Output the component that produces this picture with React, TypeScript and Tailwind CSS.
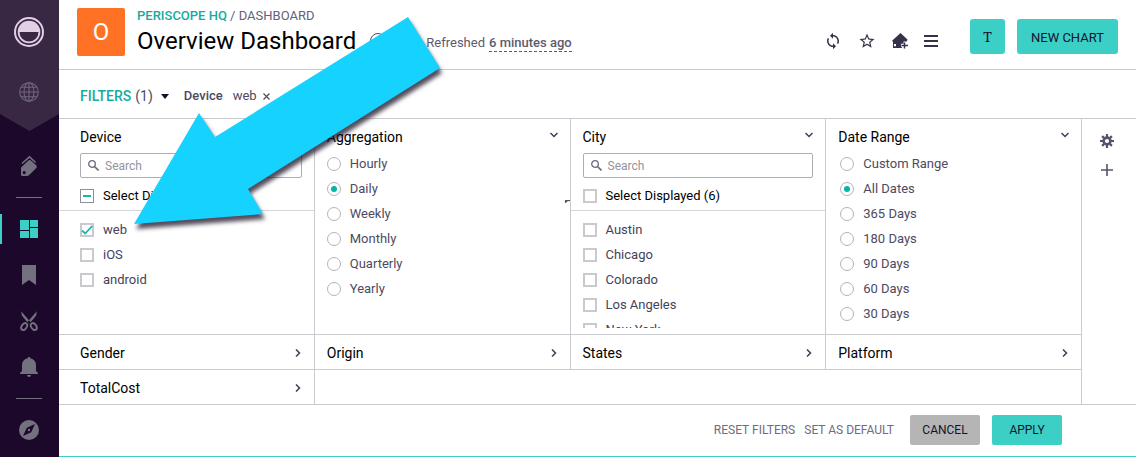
import type { ReactNode } from 'react';
import { MdStarBorder, MdSync } from 'react-icons/md';

type FilterOption = {
  label: string;
  checked?: boolean;
};

type ListFilterProps = {
  title: string;
  name: string;
  total: number;
  partial?: boolean;
  first?: boolean;
  options: FilterOption[];
};

const devices: FilterOption[] = [{ label: 'web', checked: true }, { label: 'iOS' }, { label: 'android' }];

const cities: FilterOption[] = [
  { label: 'Austin' },
  { label: 'Chicago' },
  { label: 'Colorado' },
  { label: 'Los Angeles' },
  { label: 'New York' },
];

const aggregations = ['Hourly', 'Daily', 'Weekly', 'Monthly', 'Quarterly', 'Yearly'];

const dateRanges = ['Custom Range', 'All Dates', '365 Days', '180 Days', '90 Days', '60 Days', '30 Days'];

const Logo = () => (
  <svg viewBox="0 0 30 30" className="size-[30px]">
    <circle cx="15" cy="15" r="14" fill="none" stroke="#e2cfe6" strokeWidth="2" />
    <circle cx="15" cy="15" r="11.3" fill="#e2cfe6" />
    <path d="M5.5 15h19a9.5 9.5 0 0 1-19 0z" fill="#392844" />
  </svg>
);

const GlobeIcon = () => (
  <svg viewBox="0 0 20 20" className="size-5" fill="none" stroke="currentColor" strokeWidth="1.1">
    <circle cx="10" cy="10" r="9.3" />
    <ellipse cx="10" cy="10" rx="5" ry="9.3" />
    <path d="M10 .7v18.6M.7 10h18.6M2.3 5.2h15.4M2.3 14.8h15.4" />
  </svg>
);

const TagsIcon = () => (
  <svg viewBox="0 0 18 20" className="h-5 w-[18px]">
    <path d="M2 7.5 9.5.8l6 5.7" fill="none" stroke="currentColor" strokeWidth="1.6" />
    <path
      fillRule="evenodd"
      fill="currentColor"
      d="M1 11.5 9 4l1.6.2 5.9 5.3.3 2L9 19.2l-1.6.8H1.8L1 19zM4.2 15a1.6 1.6 0 1 0 .01 3.2A1.6 1.6 0 0 0 4.2 15z"
    />
  </svg>
);

const DashboardIcon = () => (
  <svg viewBox="0 0 18 18" className="size-[18px]" fill="currentColor">
    <path d="M0 0h9v10H0zM10 0h8v7h-8zM0 11h9v7H0zM10 8h8v10h-8z" />
  </svg>
);

const BookmarkIcon = () => (
  <svg viewBox="0 0 14 20" className="h-5 w-[14px]" fill="currentColor">
    <path d="M0 0h14v20l-7-5-7 5z" />
  </svg>
);

const ScissorsIcon = () => (
  <svg viewBox="0 0 18 20" className="h-5 w-[18px]">
    <path d="M1.2.3 1.8 4.5l7 8.5 1.9-1.8zM16.8.3l-.6 4.2-7 8.5-1.9-1.8z" fill="currentColor" />
    <g fill="none" stroke="currentColor" strokeWidth="1.9">
      <ellipse cx="4.2" cy="15.6" rx="2.5" ry="3.7" transform="rotate(35 4.2 15.6)" />
      <ellipse cx="13.8" cy="15.6" rx="2.5" ry="3.7" transform="rotate(-35 13.8 15.6)" />
    </g>
  </svg>
);

const BellIcon = () => (
  <svg viewBox="0 0 18 20" className="h-5 w-[18px]" fill="currentColor">
    <path d="M8 0h2v1.3c3.6.6 6 3.2 6 6.7v6l2 2v1H0v-1l2-2V8c0-3.5 2.4-6.1 6-6.7zM7 18h4a2 2 0 0 1-4 0z" />
  </svg>
);

const CompassIcon = () => (
  <svg viewBox="0 0 20 20" className="size-5">
    <path
      fillRule="evenodd"
      fill="currentColor"
      d="M10 0a10 10 0 1 0 0 20 10 10 0 0 0 0-20zm6 4-3.8 8.2L4 16l3.8-8.2z"
    />
    <circle cx="10" cy="10" r="1.2" fill="currentColor" />
  </svg>
);

const HomePlusIcon = () => (
  <svg viewBox="0 0 16 16" className="size-4">
    <path
      fillRule="evenodd"
      fill="currentColor"
      d="M8.5 0 15.5 6.5 14.8 8.5H11.5V10.8H9V13.5L10.5 15H1V8.8L0 7.8zM2 11v2.2H4V11z"
    />
    <path d="M12.5 9.5v6M9.5 12.5H16" stroke="currentColor" strokeWidth="1.5" />
  </svg>
);

const MenuIcon = () => (
  <svg viewBox="0 0 14 12" className="h-3 w-[14px]" fill="currentColor">
    <path d="M0 0h14v2H0zM0 5h14v2H0zM0 10h14v2H0z" />
  </svg>
);

const GearIcon = () => (
  <svg viewBox="0 0 14 14" className="size-[14px]" fill="none" stroke="currentColor">
    <circle cx="7" cy="7" r="3.4" strokeWidth="2.6" />
    <path
      strokeWidth="2.2"
      d="M7 0v3M7 11v3M0 7h3M11 7h3M2.1 2.1l2 2M9.9 9.9l2 2M2.1 11.9l2-2M9.9 4.1l2-2"
    />
  </svg>
);

const PlusIcon = () => (
  <svg viewBox="0 0 12 12" className="size-3" fill="none" stroke="currentColor" strokeWidth="1.6">
    <path d="M6 0v12M0 6h12" />
  </svg>
);

const Chevron = ({ open }: { open?: boolean }) => (
  <svg
    viewBox="0 0 8 8"
    className={open ? 'size-2 rotate-90' : 'size-2'}
    fill="none"
    stroke="#3f3b55"
    strokeWidth="1.5"
  >
    <path d="m2 .5 3.5 3.5L2 7.5" />
  </svg>
);

const SearchIcon = () => (
  <svg viewBox="0 0 11 11" className="size-[11px] shrink-0" fill="none" stroke="#6b687a">
    <circle cx="4" cy="4" r="3.3" strokeWidth="1.3" />
    <path d="m6.5 6.5 4 4" strokeWidth="1.6" />
  </svg>
);

const Checkbox = ({ label, checked, partial, strong }: FilterOption & { partial?: boolean; strong?: boolean }) => (
  <label className={`flex items-center gap-[9px] text-[13px] ${strong ? 'h-5 text-black' : 'h-[25px] text-[#45425a]'}`}>
    <span className="grid place-items-center">
      <input
        type="checkbox"
        defaultChecked={checked}
        className={`col-start-1 row-start-1 size-[14px] appearance-none bg-white ${
          partial ? 'border border-[#8f8c9c]' : 'border-2 border-[#c9c9ce]'
        }`}
      />
      {checked && (
        <svg viewBox="0 0 14 14" className="pointer-events-none col-start-1 row-start-1 size-[14px]" fill="none" stroke="#14b8ab" strokeWidth="1.8">
          <path d="m2 7.5 3.2 3L12.2 3" />
        </svg>
      )}
      {partial && <span className="pointer-events-none col-start-1 row-start-1 h-[2px] w-2 bg-[#14b8ab]" />}
    </span>
    {label}
  </label>
);

type RadioListProps = {
  name: string;
  options: string[];
  selected: string;
  inset?: boolean;
};

const RadioList = ({ name, options, selected, inset }: RadioListProps) => (
  <div className={`mt-1 pr-3 ${inset ? 'pl-[14px]' : 'pl-3'}`}>
    {options.map((option) => (
      <label key={option} className="flex h-[25px] items-center gap-[9px] text-[13px] text-[#4d4a62]">
        <input
          type="radio"
          name={name}
          defaultChecked={option === selected}
          className="size-[14px] appearance-none rounded-full border border-[#b4b3ba] bg-white bg-clip-content p-[3px] checked:bg-[#00b5a5]"
        />
        {option}
      </label>
    ))}
  </div>
);

const PanelTitle = ({ title, first }: { title: string; first?: boolean }) => (
  <div className={`flex items-start justify-between pt-2 pr-3 ${first ? 'pl-[21px]' : 'pl-3'}`}>
    <h2 className="text-sm leading-5 text-black">{title}</h2>
    <button type="button" aria-label={`Collapse ${title}`} className="flex h-4 items-center">
      <Chevron open />
    </button>
  </div>
);

const ListFilter = ({ title, name, total, partial, first, options }: ListFilterProps) => (
  <section className="border-r border-b border-[#c8cbd0]">
    <PanelTitle title={title} first={first} />
    <div className={`mt-1.5 pr-3 ${first ? 'pl-[21px]' : 'pl-3'}`}>
      <div className="flex h-[25px] items-center gap-1.5 rounded-[2px] border border-[#aeaeb2] px-[7px]">
        <SearchIcon />
        <input
          type="text"
          aria-label={`Search ${name}`}
          placeholder="Search"
          className="min-w-0 flex-1 text-xs outline-none placeholder:text-[#9492a0]"
        />
      </div>
    </div>
    <div className={`mt-2 border-b border-[#d4d6da] pb-1 ${first ? 'pl-[21px]' : 'pl-3'}`}>
      <Checkbox label={`Select Displayed (${total})`} partial={partial} strong />
    </div>
    <div className={`mb-1.5 h-[117px] overflow-hidden pt-1.5 ${first ? 'pl-[21px]' : 'pl-3'}`}>
      {options.map((option) => (
        <Checkbox key={option.label} {...option} />
      ))}
    </div>
  </section>
);

const CollapsedFilter = ({ title, first }: { title: string; first?: boolean }) => (
  <button
    type="button"
    className={`flex h-[34px] items-center justify-between border-r border-[#c8cbd0] pt-0.5 pr-3 text-left text-sm text-black ${
      first ? 'pl-[21px]' : 'pl-3'
    }`}
  >
    {title}
    <Chevron />
  </button>
);

const NavItem = ({ label, active, children }: { label: string; active?: boolean; children: ReactNode }) => (
  <a
    href="#"
    aria-label={label}
    className={`flex h-[46px] w-full items-center justify-center ${active ? 'text-[#3ccfc6]' : 'text-[#73707f]'}`}
  >
    {active && <span className="h-[30px] w-[2px] bg-[#3ccfc6]" />}
    <span className="flex flex-1 justify-center">{children}</span>
    {active && <span className="w-[2px]" />}
  </a>
);

const Sidebar = () => (
  <nav className="flex w-[59px] shrink-0 flex-col items-center bg-[#1c082b]">
    <div className="flex w-full flex-col items-center gap-[35px] bg-[#392844] pt-[17px] pr-px pb-[29px] text-[#6f6680] [clip-path:polygon(0_0,100%_0,100%_87%,50%_100%,0_87%)]">
      <Logo />
      <a href="#" aria-label="Spaces">
        <GlobeIcon />
      </a>
    </div>
    <div className="mt-3 flex w-full flex-col items-center pr-px">
      <NavItem label="Tags">
        <TagsIcon />
      </NavItem>
      <hr className="my-2 w-[26px] border-[#73707f]" />
      <NavItem label="Dashboards" active>
        <DashboardIcon />
      </NavItem>
      <NavItem label="Bookmarks">
        <BookmarkIcon />
      </NavItem>
      <NavItem label="Snippets">
        <ScissorsIcon />
      </NavItem>
      <NavItem label="Alerts">
        <BellIcon />
      </NavItem>
      <hr className="my-2 w-[26px] border-[#73707f]" />
      <NavItem label="Explore">
        <CompassIcon />
      </NavItem>
    </div>
  </nav>
);

const Header = () => (
  <header className="flex h-[70px] items-start border-b border-[#c8cbd0] px-[18px]">
    <div className="mt-2 flex size-12 items-center justify-center rounded-[2px] bg-[#ff7226] text-2xl text-white">O</div>
    <div className="mt-2 ml-3">
      <div className="text-[13px] leading-4 text-[#64617a]">
        <a href="#" className="font-medium text-[#14ab9e]">
          PERISCOPE HQ
        </a>{' '}
        / DASHBOARD
      </div>
      <h1 className="mt-px text-2xl leading-8 text-black">Overview Dashboard</h1>
    </div>
    <button
      type="button"
      aria-label="Dashboard info"
      className="mt-[33px] ml-[14px] flex size-4 items-center justify-center rounded-full border border-[#4d4a62] text-[10px] text-[#4d4a62]"
    >
      i
    </button>
    <div className="mt-[34px] ml-10 flex gap-1 text-[13px] leading-[17px] text-[#5d5a70]">
      <span>Refreshed</span>
      <a href="#" className="border-b border-dashed border-[#5d5a70] font-medium">
        6 minutes ago
      </a>
    </div>
    <div className="mt-[19px] ml-auto flex items-center">
      <div className="flex items-center gap-4 pt-2 text-[#35324a]">
        <button type="button" aria-label="Refresh">
          <MdSync className="size-[18px]" />
        </button>
        <button type="button" aria-label="Favorite">
          <MdStarBorder className="size-[18px]" />
        </button>
        <button type="button" aria-label="Set as home">
          <HomePlusIcon />
        </button>
        <button type="button" aria-label="Menu">
          <MenuIcon />
        </button>
      </div>
      <button
        type="button"
        aria-label="Add text"
        className="ml-8 size-[35px] rounded-[3px] bg-[#3ccfc6] font-['Noto_Serif','DejaVu_Serif',serif] text-sm text-[#15122a]"
      >
        T
      </button>
      <button type="button" className="ml-3 h-[35px] rounded-[3px] bg-[#3ccfc6] px-[14px] pt-0.5 text-[13px] text-[#15122a]">
        NEW CHART
      </button>
    </div>
  </header>
);

const FilterBar = () => (
  <div className="flex h-[49px] items-center border-b border-[#c8cbd0] pt-1 pl-[21px] text-[13px] text-[#4d4a62]">
    <button type="button" className="flex items-center text-sm">
      <span className="font-medium text-[#14ab9e]">FILTERS</span>
      <span className="ml-1">(1)</span>
      <svg viewBox="0 0 8 5" className="ml-2 h-[5px] w-2" fill="#15122a">
        <path d="M0 0h8L4 5z" />
      </svg>
    </button>
    <span className="ml-[15px] font-medium">Device</span>
    <span className="ml-[10px]">web</span>
    <button type="button" aria-label="Remove web" className="ml-1.5">
      <svg viewBox="0 0 7 7" className="size-[7px]" fill="none" stroke="currentColor" strokeWidth="1.2">
        <path d="m.5.5 6 6M6.5.5l-6 6" />
      </svg>
    </button>
  </div>
);

const Filters = () => (
  <div className="flex border-b border-[#c8cbd0]">
    <div className="flex-1">
      <div className="grid grid-cols-4">
        <ListFilter title="Device" name="devices" total={3} partial first options={devices} />
        <section className="border-r border-b border-[#c8cbd0]">
          <PanelTitle title="Aggregation" />
          <RadioList name="aggregation" options={aggregations} selected="Daily" />
        </section>
        <ListFilter title="City" name="cities" total={6} options={cities} />
        <section className="border-r border-b border-[#c8cbd0]">
          <PanelTitle title="Date Range" />
          <RadioList name="range" options={dateRanges} selected="All Dates" inset />
        </section>
      </div>
      <div className="grid grid-cols-4 border-b border-[#c8cbd0]">
        <CollapsedFilter title="Gender" first />
        <CollapsedFilter title="Origin" />
        <CollapsedFilter title="States" />
        <CollapsedFilter title="Platform" />
      </div>
      <div className="grid grid-cols-4">
        <CollapsedFilter title="TotalCost" first />
        <div className="col-span-3 border-r border-[#c8cbd0]" />
      </div>
    </div>
    <div className="flex w-[54px] flex-col items-center gap-4 pt-[15px] pr-1 text-[#56536b]">
      <button type="button" aria-label="Filter settings">
        <GearIcon />
      </button>
      <button type="button" aria-label="Add filter">
        <PlusIcon />
      </button>
    </div>
  </div>
);

const Footer = () => (
  <footer className="flex flex-1 items-start justify-end border-b border-[#3ccfc6] py-2.5 pr-[74px] text-xs">
    <button type="button" className="h-[30px] text-[#6f6c80]">
      RESET FILTERS
    </button>
    <button type="button" className="ml-[9px] h-[30px] text-[#6f6c80]">
      SET AS DEFAULT
    </button>
    <button type="button" className="ml-4 h-[30px] w-[70px] rounded-[2px] bg-[#b5b5b5] text-[#15122a]">
      CANCEL
    </button>
    <button type="button" className="ml-3 h-[30px] w-[70px] rounded-[2px] bg-[#3ccfc6] text-[#15122a]">
      APPLY
    </button>
  </footer>
);

// Callout arrow that points at the checked device
const CalloutArrow = () => (
  <svg viewBox="0 0 600 260" className="pointer-events-none absolute top-0 left-0 h-[260px] w-[600px]">
    <polygon
      className="drop-shadow-[2px_5px_2px_rgba(25,15,35,0.75)]"
      points="134,224 199,113 215,137 408,17 440,68 248,189 263,214"
      fill="#16d2ff"
    />
    <path d="M565 200h5v1l-3 .5-1 1.5h-1z" fill="#55535c" />
  </svg>
);

const App = () => {
  return (
    <div className="relative flex min-h-screen bg-white font-['Roboto','Liberation_Sans',sans-serif]">
      <Sidebar />
      <main className="flex min-w-0 flex-1 flex-col">
        <Header />
        <FilterBar />
        <Filters />
        <Footer />
      </main>
      <CalloutArrow />
    </div>
  );
};

export default App;
